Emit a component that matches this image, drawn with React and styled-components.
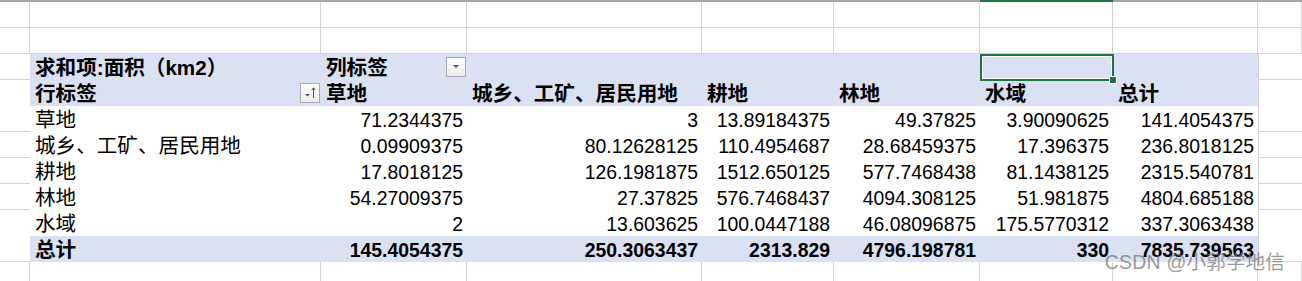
import React from 'react';
import styled, { createGlobalStyle } from 'styled-components';

const GRID = '#d4d4d4';
const BAND = '#d9e1f2';
const RULE = '#8ea9db';
const COLS = '30px 291px 146px 235px 132px 146px 133px 145px 1fr';

const GlobalStyle = createGlobalStyle`
  html, body {
    margin: 0;
    padding: 0;
    background: #fff;
  }
  body {
    font-family: "Liberation Sans", "Noto Sans CJK SC", sans-serif;
    overflow: hidden;
  }
`;

const Sheet = styled.div`
  position: relative;
  width: 1302px;
  height: 281px;
  overflow: hidden;
  background: #fff;
`;

const TopStrip = styled.div`
  display: grid;
  grid-template-columns: ${COLS};
  height: 2px;
`;

const StripCell = styled.div`
  background: ${p => (p.$active ? '#217346' : '#a6a6a6')};
`;

const Row = styled.div`
  display: grid;
  grid-template-columns: ${COLS};
  height: 26px;
`;

const Cell = styled.div`
  position: relative;
  box-sizing: border-box;
  display: flex;
  align-items: center;
  justify-content: ${p => (p.$num ? 'flex-end' : 'flex-start')};
  padding: ${p => (p.$num ? '2px 4px 0 0' : '2px 0 0 5px')};
  background: ${p => (p.$fill ? BAND : '#fff')};
  border-right: ${p => (p.$right ? `1px solid ${GRID}` : 'none')};
  border-left: ${p => (p.$left ? `1px solid ${GRID}` : 'none')};
  border-bottom: ${p =>
    p.$rule ? `1px solid ${RULE}` : p.$bottom ? `1px solid ${GRID}` : 'none'};
  font-size: ${p => (p.$num ? '19.4px' : '20.6px')};
  font-weight: ${p => (p.$bold ? 700 : 400)};
  color: #000;
  white-space: nowrap;
  line-height: 24px;
`;

const FilterButton = styled.div`
  position: absolute;
  right: 1px;
  top: 3px;
  width: 20px;
  height: 20px;
  box-sizing: border-box;
  border: 1px solid #a9a9a9;
  background: linear-gradient(#ffffff, #ececec);
  display: flex;
  align-items: center;
  justify-content: center;
`;

const Selection = styled.div`
  position: absolute;
  z-index: 2;
  inset: 0 -1px -1px 0;
  border: 2px solid #217346;
  box-shadow: inset 0 0 0 1px #fff;
  pointer-events: none;

  &::after {
    content: '';
    position: absolute;
    right: -5px;
    bottom: -5px;
    width: 6px;
    height: 6px;
    background: #217346;
    border: 1px solid #fff;
  }
`;

const Watermark = styled.div`
  position: absolute;
  z-index: 3;
  right: 17px;
  bottom: 6px;
  font-family: "Liberation Sans", "Noto Sans CJK SC", sans-serif;
  font-size: 19.5px;
  color: rgba(120, 120, 120, 0.75);
  letter-spacing: 0.2px;
`;

const DropIcon = () => (
  <svg width="10" height="6" viewBox="0 0 10 6">
    <path d="M2 1 L8 1 L5 4 Z" fill="#555" />
  </svg>
);

const SortIcon = () => (
  <svg width="16" height="14" viewBox="0 0 16 14">
    <path d="M3 8 L8 8 L5.5 10.5 Z" fill="#555" />
    <path d="M11.5 12 V2 M9.8 4 L11.5 1.8 L13.2 4" stroke="#555" strokeWidth="1" fill="none" />
  </svg>
);

const categories = ['草地', '城乡、工矿、居民用地', '耕地', '林地', '水域'];

const data = [
  ['草地', '71.2344375', '3', '13.89184375', '49.37825', '3.90090625', '141.4054375'],
  ['城乡、工矿、居民用地', '0.09909375', '80.12628125', '110.4954687', '28.68459375', '17.396375', '236.8018125'],
  ['耕地', '17.8018125', '126.1981875', '1512.650125', '577.7468438', '81.1438125', '2315.540781'],
  ['林地', '54.27009375', '27.37825', '576.7468437', '4094.308125', '51.981875', '4804.685188'],
  ['水域', '2', '13.603625', '100.0447188', '46.08096875', '175.5770312', '337.3063438'],
];

const totals = ['145.4054375', '250.3063437', '2313.829', '4796.198781', '330', '7835.739563'];

const EmptyRow = () => (
  <Row>
    {Array.from({ length: 9 }).map((_, i) => (
      <Cell key={i} $right $bottom />
    ))}
  </Row>
);

export default function App() {
  return (
    <>
      <GlobalStyle />
      <Sheet>
        <TopStrip>
          {Array.from({ length: 9 }).map((_, i) => (
            <StripCell key={i} $active={i === 6} />
          ))}
        </TopStrip>

        <EmptyRow />
        <EmptyRow />

        <Row>
          <Cell $bottom />
          <Cell $fill $bold>求和项:面积（km2）</Cell>
          <Cell $fill $bold>
            列标签
            <FilterButton><DropIcon /></FilterButton>
          </Cell>
          <Cell $fill />
          <Cell $fill />
          <Cell $fill />
          <Cell $fill>
            <Selection />
          </Cell>
          <Cell $fill />
          <Cell $bottom $left />
        </Row>

        <Row>
          <Cell $bottom />
          <Cell $fill $bold $rule>
            行标签
            <FilterButton><SortIcon /></FilterButton>
          </Cell>
          {categories.map(c => (
            <Cell key={c} $fill $bold $rule>{c}</Cell>
          ))}
          <Cell $fill $bold $rule>总计</Cell>
          <Cell $bottom $left />
        </Row>

        {data.map((r, ri) => (
          <Row key={r[0]}>
            <Cell $bottom />
            {r.map((v, ci) => (
              <Cell key={ci} $num={ci > 0} $rule={ri === data.length - 1}>{v}</Cell>
            ))}
            <Cell $bottom $left />
          </Row>
        ))}

        <Row>
          <Cell $bottom />
          <Cell $fill $bold>总计</Cell>
          {totals.map((v, i) => (
            <Cell key={i} $fill $bold $num>{v}</Cell>
          ))}
          <Cell $bottom $left />
        </Row>

        <Row>
          {Array.from({ length: 9 }).map((_, i) => (
            <Cell key={i} $right />
          ))}
        </Row>

        <Watermark>CSDN @小郭学地信</Watermark>
      </Sheet>
    </>
  );
}
